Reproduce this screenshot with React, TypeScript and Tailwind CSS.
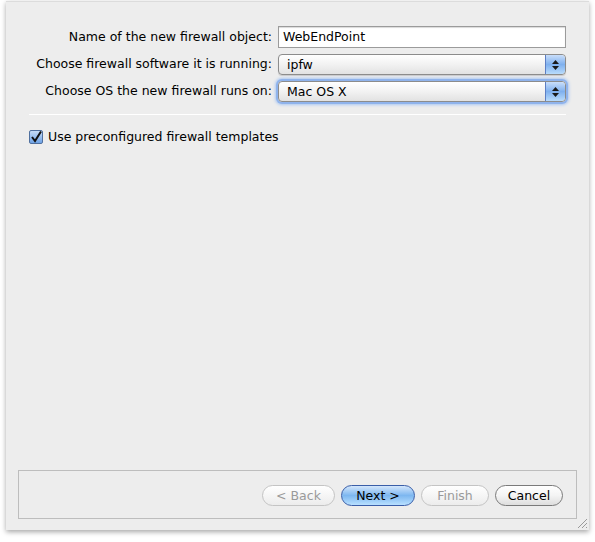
import React from 'react';

/*
    New firewall wizard page (Mac OS X look)
*/
function Stepper() {
    return (
        <div className="absolute right-0 top-0 bottom-0 w-[20px] rounded-r-[4px] border-l border-[#5d7fc4] bg-gradient-to-b from-[#c9defa] via-[#7fb0ee] to-[#b9dcfc] flex flex-col items-center justify-center gap-[2px]">
            <svg width="7" height="4" viewBox="0 0 7 4"><path d="M3.5 0 L7 4 L0 4 Z" fill="#1a1a1a" /></svg>
            <svg width="7" height="4" viewBox="0 0 7 4"><path d="M0 0 L7 0 L3.5 4 Z" fill="#1a1a1a" /></svg>
        </div>
    );
}

function Select(props: { value: string; focused?: boolean }) {
    return (
        <div className={"relative h-[21px] w-[288px] rounded-[4px] border border-[#8c8c8c] bg-gradient-to-b from-white via-[#f2f2f2] to-[#e2e2e2] " + (props.focused ? "shadow-[0_0_0_2px_#8fb3ec,0_0_3px_3px_#aac7f2]" : "shadow-[0_1px_1px_rgba(0,0,0,0.15)]")}>
            <div className="pl-[8px] leading-[19px] text-[12.5px] text-black">{props.value}</div>
            <Stepper />
        </div>
    );
}

function Button(props: { label: string; width: string; kind: 'default' | 'primary' | 'disabled' }) {
    let cls = "h-[21px] rounded-full border text-[12.5px] leading-[19px] text-center ";
    if (props.kind === 'primary') {
        cls += "border-[#3a5ea8] text-black bg-gradient-to-b from-[#d3e6fb] via-[#7db7f0] to-[#b8e0ff]";
    } else if (props.kind === 'disabled') {
        cls += "border-[#c4c4c4] text-[#9a9a9a] bg-gradient-to-b from-white to-[#ececec]";
    } else {
        cls += "border-[#7a7a7a] text-black bg-gradient-to-b from-white via-[#f4f4f4] to-[#dedede]";
    }
    return <div className={cls + " " + props.width}>{props.label}</div>;
}

export default function App() {
    return (
        <div className="min-h-[542px] bg-white pl-[6px] pt-[1px] font-['DejaVu_Sans',sans-serif]">
            <div className="relative flex flex-col w-[583px] h-[529px] bg-[#ededed] border-t border-[#dcdcdc] shadow-[0_2px_5px_rgba(0,0,0,0.35)]">
                <div className="pt-[24px] flex flex-col gap-[6px]">
                    <div className="flex items-center h-[22px]">
                        <div className="w-[266px] text-right text-[12.5px] text-black">Name of the new firewall object:</div>
                        <div className="ml-[6px] h-[22px] w-[288px] border border-[#9b9b9b] bg-white pl-[4px] text-[12.5px] leading-[20px] text-black shadow-[inset_0_1px_1px_rgba(0,0,0,0.15)]">WebEndPoint</div>
                    </div>
                    <div className="flex items-center h-[21px]">
                        <div className="w-[266px] text-right text-[12.5px] text-black">Choose firewall software it is running:</div>
                        <div className="ml-[6px]"><Select value="ipfw" /></div>
                    </div>
                    <div className="flex items-center h-[21px]">
                        <div className="w-[266px] text-right text-[12.5px] text-black">Choose OS the new firewall runs on:</div>
                        <div className="ml-[6px]"><Select value="Mac OS X" focused /></div>
                    </div>
                </div>
                <div className="ml-[23px] mr-[23px] mt-[12px] h-px bg-[#c5c5c5] border-b border-white"></div>
                <div className="ml-[23px] mt-[13px] flex items-center gap-[5px]">
                    <div className="w-[14px] h-[14px] rounded-[2px] border border-[#50709f] bg-gradient-to-b from-[#c6dcf7] to-[#6fa3e6] flex items-center justify-center">
                        <svg width="12" height="12" viewBox="0 0 12 12"><path d="M2 6 L5 10 L11 0.5" stroke="#111" strokeWidth="2" fill="none" /></svg>
                    </div>
                    <div className="text-[12.5px] text-black">Use preconfigured firewall templates</div>
                </div>
                <div className="flex-1"></div>
                <div className="mx-[12px] mb-[11px] h-[49px] border border-[#bdbdbd] flex items-center justify-end gap-[6px] pr-[13px] pt-[1px]">
                    <Button label="< Back" width="w-[73px]" kind="disabled" />
                    <Button label="Next >" width="w-[74px]" kind="primary" />
                    <Button label="Finish" width="w-[68px]" kind="disabled" />
                    <Button label="Cancel" width="w-[68px]" kind="default" />
                </div>
                <svg className="absolute right-[1px] bottom-[1px]" width="11" height="11" viewBox="0 0 11 11">
                    <path d="M10 1 L1 10 M10 5 L5 10 M10 9 L9 10" stroke="#9a9a9a" strokeWidth="1" />
                </svg>
            </div>
        </div>
    );
}
